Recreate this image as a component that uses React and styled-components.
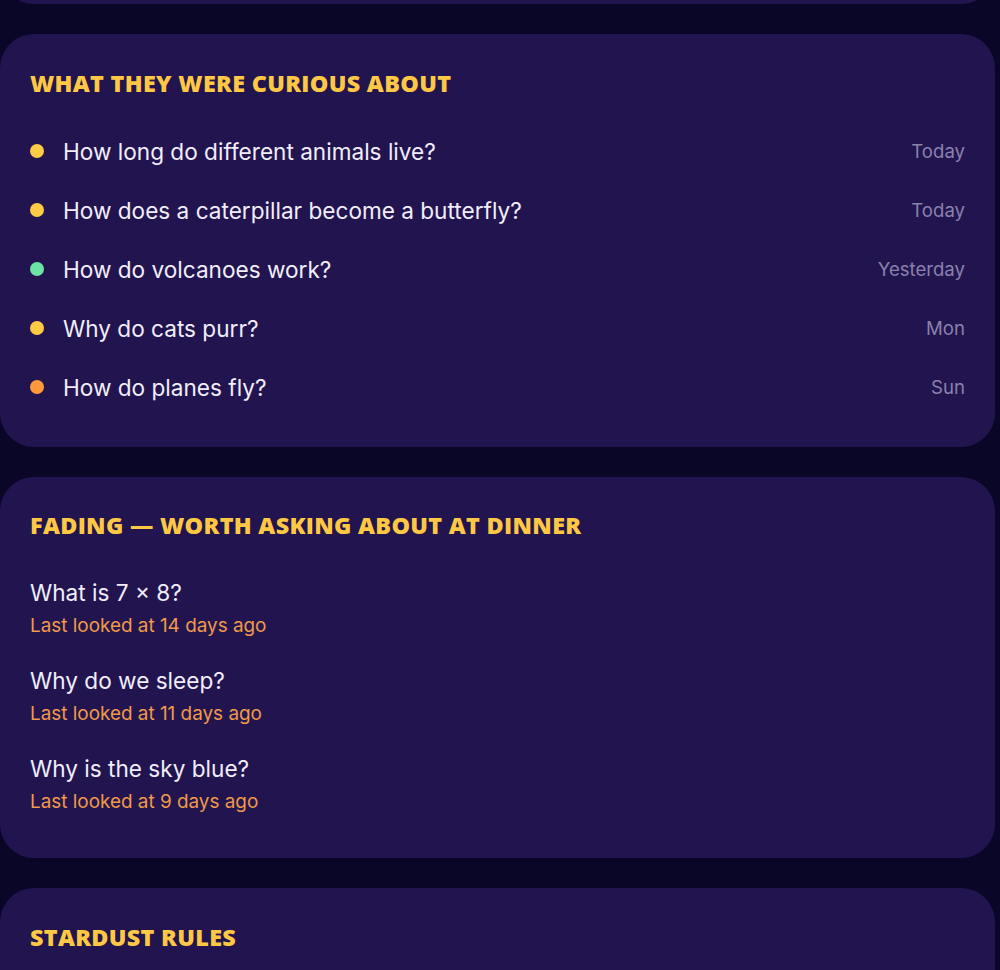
import React from 'react';
import styled, { createGlobalStyle } from 'styled-components';

const GlobalStyle = createGlobalStyle`
  html, body {
    margin: 0;
    padding: 0;
    background: #0a0627;
    overflow: hidden;
  }
  body {
    font-family: 'Inter', 'Noto Sans', sans-serif;
    -webkit-font-smoothing: antialiased;
  }
`;

const Page = styled.main`
  display: flex;
  flex-direction: column;
  gap: 30px;
  padding: 0 5px 40px 0;
  margin-top: -116px;
`;

const Card = styled.section`
  background: #22154f;
  border-radius: 34px;
  padding: ${props => props.pad || '34px 30px 45px'};
  min-height: ${props => props.minHeight || 'auto'};
  box-sizing: border-box;
`;

const Heading = styled.h2`
  margin: 0;
  font-family: 'Open Sans', 'Noto Sans', sans-serif;
  font-weight: 800;
  font-size: 23.4px;
  line-height: 30px;
  letter-spacing: 0.3px;
  color: #ffc844;
  text-transform: uppercase;
`;

const TopicList = styled.ul`
  list-style: none;
  margin: 38px 0 0;
  padding: 0;
  display: flex;
  flex-direction: column;
  gap: 29px;
`;

const TopicRow = styled.li`
  display: flex;
  align-items: center;
  height: 30px;
`;

const Dot = styled.span`
  width: 14px;
  height: 14px;
  border-radius: 50%;
  background: ${props => props.color};
  flex-shrink: 0;
  margin-right: 19px;
`;

const TopicText = styled.span`
  flex: 1;
  font-size: 22.6px;
  color: #f1edf9;
`;

const When = styled.span`
  font-size: 18.6px;
  color: #8a81ad;
`;

const FadingList = styled.div`
  display: flex;
  flex-direction: column;
  gap: 29px;
  margin-top: 39px;
`;

const FadingItem = styled.div`
  display: flex;
  flex-direction: column;
  gap: 7px;
`;

const Question = styled.div`
  font-size: 22.6px;
  line-height: 28px;
  color: #f1edf9;
`;

const LastSeen = styled.div`
  font-size: 18.9px;
  line-height: 24px;
  color: #f0994a;
`;

const topics = [
  { text: 'How long do different animals live?', when: 'Today', color: '#ffcb45' },
  { text: 'How does a caterpillar become a butterfly?', when: 'Today', color: '#ffcb45' },
  { text: 'How do volcanoes work?', when: 'Yesterday', color: '#6ee3a6' },
  { text: 'Why do cats purr?', when: 'Mon', color: '#ffcb45' },
  { text: 'How do planes fly?', when: 'Sun', color: '#ff9a3c' },
];

const fading = [
  { q: 'What is 7 × 8?', days: 14 },
  { q: 'Why do we sleep?', days: 11 },
  { q: 'Why is the sky blue?', days: 9 },
];

export default function App() {
  return (
    <>
      <GlobalStyle />
      <Page>
        <Card minHeight="120px" />
        <Card>
          <Heading>What they were curious about</Heading>
          <TopicList>
            {topics.map(t => (
              <TopicRow key={t.text}>
                <Dot color={t.color} />
                <TopicText>{t.text}</TopicText>
                <When>{t.when}</When>
              </TopicRow>
            ))}
          </TopicList>
        </Card>
        <Card pad="33px 30px 44px">
          <Heading>Fading — worth asking about at dinner</Heading>
          <FadingList>
            {fading.map(f => (
              <FadingItem key={f.q}>
                <Question>{f.q}</Question>
                <LastSeen>Last looked at {f.days} days ago</LastSeen>
              </FadingItem>
            ))}
          </FadingList>
        </Card>
        <Card minHeight="200px">
          <Heading>Stardust rules</Heading>
        </Card>
      </Page>
    </>
  );
}
